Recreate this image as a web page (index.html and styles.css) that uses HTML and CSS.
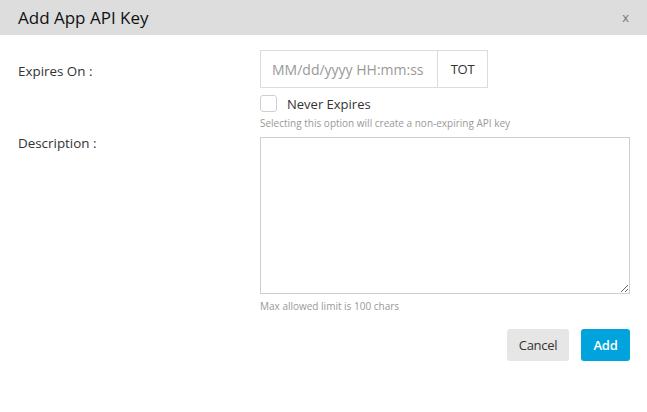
FILE: index.html
```html
<!DOCTYPE html>
<html>
<head>
<meta charset="utf-8">
<link rel="stylesheet" href="styles.css">
</head>
<body>
<div class="modal">
  <div class="modal-header">
    <h1 class="modal-title">Add App API Key</h1>
    <span class="close">x</span>
  </div>
  <div class="modal-body">
    <div class="row row-expires">
      <label class="label">Expires On :</label>
      <div class="field">
        <div class="input-group">
          <input class="date-input" type="text" placeholder="MM/dd/yyyy HH:mm:ss">
          <span class="addon">TOT</span>
        </div>
        <div class="check-row">
          <span class="checkbox"></span>
          <span class="check-label">Never Expires</span>
        </div>
        <div class="help">Selecting this option will create a non-expiring API key</div>
      </div>
    </div>
    <div class="row row-desc">
      <label class="label">Description :</label>
      <div class="field">
        <textarea class="textarea"></textarea>
        <div class="help help-max">Max allowed limit is 100 chars</div>
      </div>
    </div>
    <div class="actions">
      <button class="btn btn-cancel">Cancel</button>
      <button class="btn btn-add">Add</button>
    </div>
  </div>
</div>
</body>
</html>
```
FILE: styles.css
```css
html, body {
  margin: 0;
  padding: 0;
  background: #fff;
}
body {
  font-family: "Open Sans", "Noto Sans", sans-serif;
  color: #333;
  width: 647px;
  height: 412px;
  overflow: hidden;
}
.modal-header {
  height: 35px;
  background: #dddddd;
  display: flex;
  align-items: center;
  justify-content: space-between;
  padding: 0 18px;
}
.modal-title {
  margin: 0;
  font-size: 17px;
  font-weight: 400;
  color: #111;
}
.close {
  font-size: 13px;
  color: #777;
  margin-right: 0;
  margin-top: -2px;
}
.modal-body {
  padding: 15px 17px 0 18px;
}
.row {
  display: flex;
}
.label {
  width: 242px;
  font-size: 13.4px;
  line-height: 16px;
  color: #333;
}
.row-expires .label {
  padding-top: 13px;
}
.field {
  flex: 1;
}
.input-group {
  display: flex;
  width: 228px;
  height: 38px;
  box-sizing: border-box;
  border: 1px solid #dcdcdc;
}
.date-input {
  width: 177px;
  box-sizing: border-box;
  border: none;
  border-right: 1px solid #dcdcdc;
  padding: 0 0 0 11px;
  font-family: inherit;
  font-size: 14px;
  outline: none;
}
.date-input::placeholder {
  color: #999;
}
.addon {
  flex: 1;
  display: flex;
  align-items: center;
  justify-content: center;
  font-size: 13px;
  color: #333;
  letter-spacing: -0.3px;
}
.check-row {
  display: flex;
  align-items: center;
  margin-top: 7px;
  height: 17px;
}
.checkbox {
  width: 17px;
  height: 17px;
  box-sizing: border-box;
  border: 1px solid #cfcfcf;
  border-radius: 3px;
  background: #fff;
}
.check-label {
  margin-left: 10px;
  font-size: 13px;
  color: #333;
}
.help {
  font-size: 10px;
  line-height: 13px;
  color: #999;
  margin-top: 5px;
}
.row-desc {
  margin-top: 7px;
}
.row-desc .label {
  margin-top: -2px;
}
.textarea {
  display: block;
  width: 370px;
  height: 157px;
  box-sizing: border-box;
  border: 1px solid #cfcfcf;
  resize: both;
  margin: 0;
  outline: none;
}
.help-max {
  margin-top: 6px;
}
.actions {
  display: flex;
  justify-content: flex-end;
  gap: 12px;
  margin-top: 16px;
}
.btn {
  height: 32px;
  border: none;
  border-radius: 3px;
  font-family: inherit;
  font-size: 13px;
  letter-spacing: -0.3px;
  padding: 0;
}
.btn-cancel {
  width: 62px;
  background: #e6e6e6;
  color: #333;
}
.btn-add {
  width: 49px;
  background: #00a3db;
  color: #fff;
  font-weight: 600;
}
```
